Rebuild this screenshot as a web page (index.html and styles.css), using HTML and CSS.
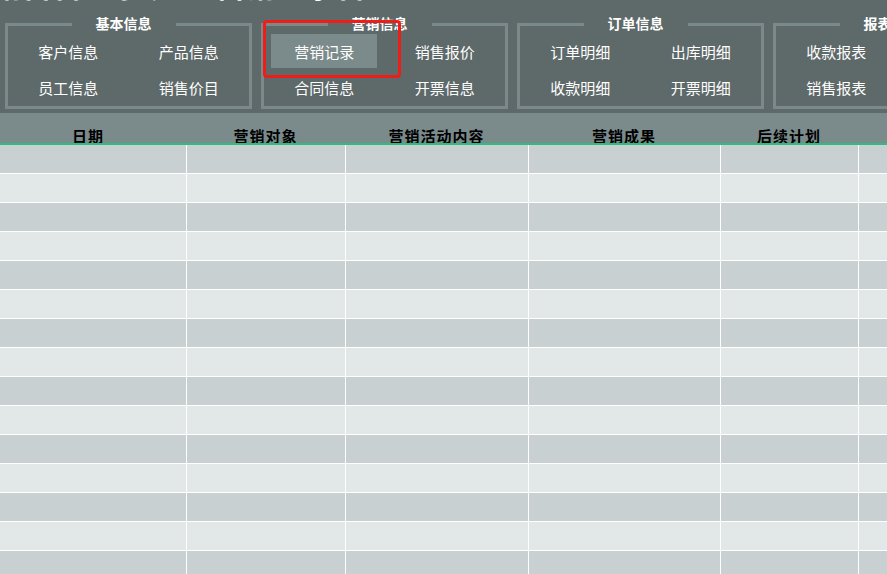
FILE: index.html
```html
<!DOCTYPE html>
<html lang="zh-CN">
<head>
<meta charset="utf-8">
<title>营销记录</title>
<link rel="stylesheet" href="styles.css">
</head>
<body>
<div class="app">
  <div class="title"><span>销售管理系统 — 营销记录管理</span></div>
  <div class="toolbar">
    <fieldset class="group">
      <legend>基本信息</legend>
      <div class="btns">
        <div class="btn">客户信息</div>
        <div class="btn">产品信息</div>
        <div class="btn">员工信息</div>
        <div class="btn">销售价目</div>
      </div>
    </fieldset>
    <fieldset class="group">
      <legend>营销信息</legend>
      <div class="btns">
        <div class="btn active">营销记录</div>
        <div class="btn">销售报价</div>
        <div class="btn">合同信息</div>
        <div class="btn">开票信息</div>
      </div>
    </fieldset>
    <fieldset class="group">
      <legend>订单信息</legend>
      <div class="btns">
        <div class="btn">订单明细</div>
        <div class="btn">出库明细</div>
        <div class="btn">收款明细</div>
        <div class="btn">开票明细</div>
      </div>
    </fieldset>
    <fieldset class="group">
      <legend>报表信息</legend>
      <div class="btns">
        <div class="btn">收款报表</div>
        <div class="btn">应收报表</div>
        <div class="btn">销售报表</div>
        <div class="btn">利润报表</div>
      </div>
    </fieldset>
    <div class="highlight"></div>
  </div>
  <div class="thead">
    <div class="th th-date">日期</div>
    <div class="th">营销对象</div>
    <div class="th">营销活动内容</div>
    <div class="th">营销成果</div>
    <div class="th">后续计划</div>
    <div class="th"></div>
  </div>
  <div class="tbody">
    <div class="row"><div></div><div></div><div></div><div></div><div></div><div></div></div>
    <div class="row"><div></div><div></div><div></div><div></div><div></div><div></div></div>
    <div class="row"><div></div><div></div><div></div><div></div><div></div><div></div></div>
    <div class="row"><div></div><div></div><div></div><div></div><div></div><div></div></div>
    <div class="row"><div></div><div></div><div></div><div></div><div></div><div></div></div>
    <div class="row"><div></div><div></div><div></div><div></div><div></div><div></div></div>
    <div class="row"><div></div><div></div><div></div><div></div><div></div><div></div></div>
    <div class="row"><div></div><div></div><div></div><div></div><div></div><div></div></div>
    <div class="row"><div></div><div></div><div></div><div></div><div></div><div></div></div>
    <div class="row"><div></div><div></div><div></div><div></div><div></div><div></div></div>
    <div class="row"><div></div><div></div><div></div><div></div><div></div><div></div></div>
    <div class="row"><div></div><div></div><div></div><div></div><div></div><div></div></div>
    <div class="row"><div></div><div></div><div></div><div></div><div></div><div></div></div>
    <div class="row"><div></div><div></div><div></div><div></div><div></div><div></div></div>
    <div class="row"><div></div><div></div><div></div><div></div><div></div><div></div></div>
  </div>
</div>
</body>
</html>
```

FILE: styles.css
```css
* { box-sizing: border-box; }
html, body {
  margin: 0;
  padding: 0;
  height: 100%;
  overflow: hidden;
  background: #5e6969;
  font-family: "Noto Sans CJK SC", "Noto Sans", sans-serif;
}
.app {
  width: 887px;
  height: 574px;
  overflow: hidden;
}
.title {
  height: 14px;
  overflow: hidden;
  white-space: nowrap;
}
.title span {
  display: block;
  color: #ffffff;
  font-size: 30px;
  font-weight: bold;
  line-height: 30px;
  margin-top: -31px;
  margin-left: -8px;
}
.toolbar {
  position: relative;
  display: flex;
  gap: 9px;
  padding-left: 5px;
  height: 99px;
  width: 1100px;
}
.group {
  flex: 0 0 247px;
  width: 247px;
  margin: 0;
  padding: 0 10px 0 0;
  border: 3px solid #7a8a8a;
  height: 95px;
  min-width: 0;
}
.group legend {
  margin: 0 auto;
  padding: 0 24px 3px;
  color: #ffffff;
  font-size: 14px;
  font-weight: bold;
  line-height: 18px;
  white-space: nowrap;
}
.btns {
  display: grid;
  grid-template-columns: 1fr 1fr;
  grid-auto-rows: 36px;
  margin-top: -1px;
  margin-right: -10px;
}
.btn {
  justify-self: center;
  width: 106px;
  height: 34px;
  display: flex;
  align-items: center;
  justify-content: center;
  color: #ffffff;
  font-size: 15px;
}
.btn.active {
  background: #7b8b8b;
}
.highlight {
  position: absolute;
  left: 263px;
  top: 6px;
  width: 138px;
  height: 58px;
  border: 3px solid #ee1d17;
  border-radius: 4px;
}
.thead {
  display: grid;
  grid-template-columns: 186px 159px 183px 192px 138px 1fr;
  height: 32px;
  background: #7b8b8c;
  overflow: hidden;
  border-bottom: 2px solid #2ebd7f;
}
.th {
  display: flex;
  align-items: flex-end;
  justify-content: center;
  color: #000000;
  font-size: 15px;
  font-weight: bold;
  letter-spacing: 1px;
  line-height: 15px;
}
.th-date {
  padding-right: 10px;
}
.tbody {
  display: flex;
  flex-direction: column;
  gap: 1px;
  background: #ffffff;
}
.row {
  display: grid;
  grid-template-columns: 186px 158px 182px 191px 137px 1fr;
  column-gap: 1px;
  height: 28px;
  background: #ffffff;
}
.row > div {
  background: #c8d0d1;
}
.row:nth-child(even) > div {
  background: #e2e8e8;
}
```
